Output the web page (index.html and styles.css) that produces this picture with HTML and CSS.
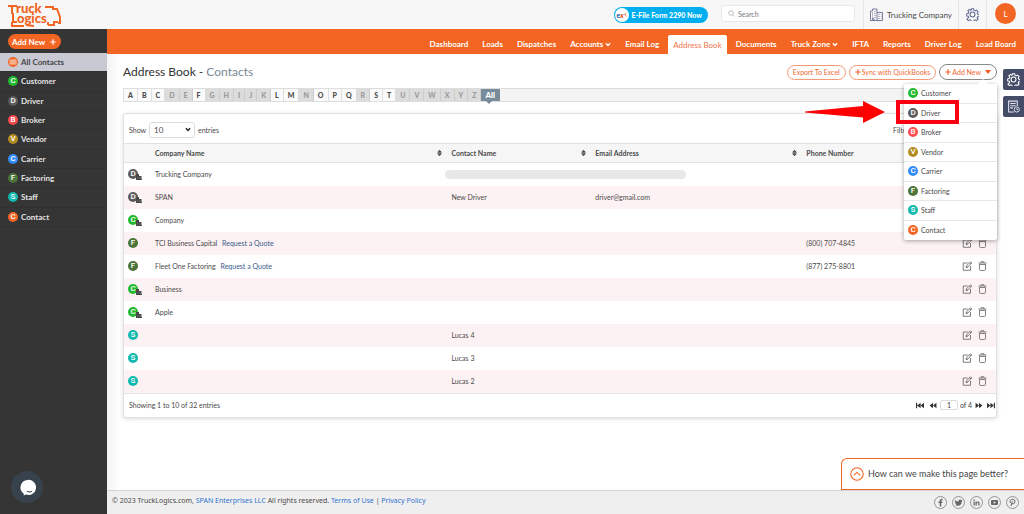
FILE: index.html
```html
<!DOCTYPE html>
<html lang="en">
<head>
<meta charset="utf-8">
<meta name="viewport" content="width=device-width, initial-scale=1">
<title>TruckLogics - Address Book</title>
<link rel="stylesheet" href="styles.css">
</head>
<body>
<svg class="sprite" aria-hidden="true">
  <symbol id="edit" viewBox="0 0 20 20"><path d="M10.500 4H1.500V18.500H16V10" fill="none" stroke="currentColor" stroke-width="1.700"/><path d="M7 13l1-3.500L16 1.500l2.500 2.500-8 8zM14 3.500l2.500 2.500M7 13l3.500-1" fill="none" stroke="currentColor" stroke-width="1.700"/></symbol>
  <symbol id="trash" viewBox="0 0 18 20"><path d="M1 4H17M6 4V1.500H12V4M3 5.500V16.500Q3 19 5.500 19H12.500Q15 19 15 16.500V5.500M4 7H14" fill="none" stroke="currentColor" stroke-width="1.600"/></symbol>
  <symbol id="building" viewBox="0 0 12 12"><path d="M0 0H6V4H11V10H12V12H0z" fill="#484848"/><path d="M3 7V9M6.500 7V9M9 7V9" stroke="#999" stroke-width="1"/></symbol>
  <symbol id="sort" viewBox="0 0 10 14"><path d="M1.500 5.500L5 1.500L8.500 5.500zM1.500 8.500L5 12.500L8.500 8.500z" fill="#777" stroke="#222" stroke-width="1.400"/></symbol>
  <symbol id="chev" viewBox="0 0 10 8"><path d="M1.500 2L5 5.500L8.500 2" fill="none" stroke="currentColor" stroke-width="2.400"/></symbol>
  <symbol id="plus" viewBox="0 0 10 10"><path d="M5 0.500V9.500M0.500 5H9.500" stroke="currentColor" stroke-width="2"/></symbol>
  <symbol id="gear" viewBox="0 0 24 24"><path d="M10 1.500h4l.8 3 2 .9 2.800-1.600 2.700 2.700-1.600 2.800.8 2 3 .8v4l-3 .2-.9 2 1.600 2.300-2.700 2.700-2.700-1.400-2 .8-.8 2.300h-4l-.8-2.300-2-.8-2.700 1.400-2.700-2.700L5 17.300l-.8-2-2.900-.6v-4l2.900-.8.9-1.900L3.500 5.300l2.700-2.700L9 4.500z" fill="none" stroke="currentColor" stroke-width="2"/><circle cx="12" cy="12" r="4.500" fill="none" stroke="currentColor" stroke-width="2"/></symbol>
</svg>

<header class="top">
  <a class="logo" href="#" aria-label="TruckLogics">
    <svg viewBox="0 0 54 26" width="54" height="26">
      <text x="8" y="11" class="logo-word">ruck</text>
      <text x="9" y="21" class="logo-word">ogics</text>
      <g fill="none" stroke="#f26522" stroke-width="2"><path d="M0 4H9M4 4V12M5 11V20H9M4 20V24H16M18 23L26 24"/><path d="M37 5H45V7H49L52 15V21H50M40 23H46V20H50M40 23V20"/></g>
    </svg>
  </a>
  <a class="efile" href="#"><span class="efile-mark"><b>e</b><i>x</i><svg viewBox="0 0 10 10"><path d="M5 4L9 9M6 5L8 2" stroke="#e2502a" stroke-width="1.500"/></svg></span>E-File Form 2290 Now</a>
  <label class="search"><svg viewBox="0 0 14 14"><circle cx="6" cy="6" r="4.500"/><path d="M9.500 9.500L13 13"/></svg><input type="search" placeholder="Search" aria-label="Search"></label>
  <a class="company" href="#"><svg viewBox="0 0 26 26"><path d="M1 25V6H5V2H14V25M14 9H25V25H0M4 10H6M9 7H11M4 14H6M9 11H11M4 18H6M9 15H11M9 19H11M17 13H19M22 13H23M17 17H19M22 17H23M17 21H19M22 21H23M5 25V21H8V25" fill="none" stroke="#646c92" stroke-width="1.700"/></svg>Trucking Company</a>
  <button class="settings" aria-label="Settings"><svg><use href="#gear"/></svg></button>
  <button class="avatar">L</button>
</header>

<div class="shell">
  <aside class="side">
    <div class="side-top"><button class="side-add">Add New <svg><use href="#plus"/></svg></button></div>
    <ul class="side-list">
      <li class="current"><a href="#"><span class="badge orange"><svg viewBox="0 0 12 12"><path d="M1.500 3H10.500V9H1.500zM6 3V9M3 5H5M7 5H9M3 7H5M7 7H9" fill="none" stroke="#fff" stroke-width="1"/></svg></span>All Contacts</a></li>
      <li><a href="#"><span class="badge green">C</span>Customer</a></li>
      <li><a href="#"><span class="badge grey">D</span>Driver</a></li>
      <li><a href="#"><span class="badge red">B</span>Broker</a></li>
      <li><a href="#"><span class="badge gold">V</span>Vendor</a></li>
      <li><a href="#"><span class="badge blue">C</span>Carrier</a></li>
      <li><a href="#"><span class="badge olive">F</span>Factoring</a></li>
      <li><a href="#"><span class="badge teal">S</span>Staff</a></li>
      <li><a href="#"><span class="badge orange">C</span>Contact</a></li>
    </ul>
    <button class="chat" aria-label="Chat"><svg viewBox="0 0 18 18"><path d="M9 1A8 8 0 1 1 7.500 16.500L5 17.500V15.500A8 8 0 0 1 9 1z" fill="#fff"/><path d="M8.500 13Q11 14.500 13.500 13" fill="none" stroke="#37424c" stroke-width="1.200"/></svg></button>
  </aside>

  <div class="content">
    <nav class="nav">
      <a href="#">Dashboard</a><a href="#">Loads</a><a href="#">Dispatches</a><a href="#">Accounts <svg><use href="#chev"/></svg></a><a href="#">Email Log</a><a href="#" class="active">Address Book</a><a href="#">Documents</a><a href="#">Truck Zone <svg><use href="#chev"/></svg></a><a href="#">IFTA</a><a href="#">Reports</a><a href="#">Driver Log</a><a href="#">Load Board</a>
    </nav>

    <main class="main">
      <div class="title-row">
        <h1>Address Book - <span>Contacts</span></h1>
        <div class="actions">
          <button class="pill">Export To Excel</button>
          <button class="pill"><svg><use href="#plus"/></svg>Sync with QuickBooks</button>
          <div class="add-wrap">
            <button class="pill dark"><svg><use href="#plus"/></svg>Add New<span class="caret"></span></button>
            <ul class="menu">
              <li><a href="#"><span class="badge green">C</span>Customer</a></li>
              <li><a href="#"><span class="badge grey">D</span>Driver</a></li>
              <li><a href="#"><span class="badge red">B</span>Broker</a></li>
              <li><a href="#"><span class="badge gold">V</span>Vendor</a></li>
              <li><a href="#"><span class="badge blue">C</span>Carrier</a></li>
              <li><a href="#"><span class="badge olive">F</span>Factoring</a></li>
              <li><a href="#"><span class="badge teal">S</span>Staff</a></li>
              <li><a href="#"><span class="badge orange">C</span>Contact</a></li>
            </ul>
            <span class="mark-frame"></span>
            <svg class="mark-arrow" viewBox="0 0 82 24"><path d="M1 11.500L59 6V1L81 12L59 23V17.500L1 12.500z" fill="#f00"/></svg>
          </div>
        </div>
      </div>

      <div class="letters">
        <a href="#">A</a><a href="#">B</a><a href="#">C</a><a class="off">D</a><a class="off">E</a><a href="#">F</a><a class="off">G</a><a class="off">H</a><a class="off">I</a><a class="off">J</a><a class="off">K</a><a href="#">L</a><a href="#">M</a><a class="off">N</a><a href="#">O</a><a href="#">P</a><a href="#">Q</a><a class="off">R</a><a href="#">S</a><a href="#">T</a><a class="off">U</a><a class="off">V</a><a class="off">W</a><a class="off">X</a><a class="off">Y</a><a class="off">Z</a><a class="all" href="#">All</a>
      </div>

      <section class="panel">
        <div class="panel-top">
          <label>Show <span class="select"><select><option>10</option><option>25</option></select><svg><use href="#chev"/></svg></span> entries</label>
          <span>Filter</span>
        </div>
        <table>
          <colgroup><col class="c-icon"><col class="c-company"><col class="c-contact"><col class="c-email"><col><col class="c-act"></colgroup>
          <thead><tr><th></th><th><span class="th">Company Name<svg><use href="#sort"/></svg></span></th><th><span class="th">Contact Name<svg><use href="#sort"/></svg></span></th><th><span class="th">Email Address<svg><use href="#sort"/></svg></span></th><th>Phone Number</th><th></th></tr></thead>
          <tbody>
            <tr><td><span class="badge grey">D<svg class="firm"><use href="#building"/></svg></span></td><td>Trucking Company</td><td colspan="2" class="masked"><span class="mask"></span></td><td></td><td class="acts"></td></tr>
            <tr><td><span class="badge grey">D<svg class="firm"><use href="#building"/></svg></span></td><td>SPAN</td><td>New Driver</td><td>driver@gmail.com</td><td></td><td class="acts"></td></tr>
            <tr><td><span class="badge green">C<svg class="firm"><use href="#building"/></svg></span></td><td>Company</td><td></td><td></td><td></td><td class="acts"></td></tr>
            <tr><td><span class="badge olive">F</span></td><td>TCI Business Capital <a class="quote" href="#">Request a Quote</a></td><td></td><td></td><td>(800) 707-4845</td><td class="acts"><button aria-label="Edit"><svg><use href="#edit"/></svg></button><button aria-label="Delete"><svg><use href="#trash"/></svg></button></td></tr>
            <tr><td><span class="badge olive">F</span></td><td>Fleet One Factoring <a class="quote" href="#">Request a Quote</a></td><td></td><td></td><td>(877) 275-8801</td><td class="acts"><button aria-label="Edit"><svg><use href="#edit"/></svg></button><button aria-label="Delete"><svg><use href="#trash"/></svg></button></td></tr>
            <tr><td><span class="badge green">C<svg class="firm"><use href="#building"/></svg></span></td><td>Business</td><td></td><td></td><td></td><td class="acts"><button aria-label="Edit"><svg><use href="#edit"/></svg></button><button aria-label="Delete"><svg><use href="#trash"/></svg></button></td></tr>
            <tr><td><span class="badge green">C<svg class="firm"><use href="#building"/></svg></span></td><td>Apple</td><td></td><td></td><td></td><td class="acts"><button aria-label="Edit"><svg><use href="#edit"/></svg></button><button aria-label="Delete"><svg><use href="#trash"/></svg></button></td></tr>
            <tr><td><span class="badge teal">S</span></td><td></td><td>Lucas 4</td><td></td><td></td><td class="acts"><button aria-label="Edit"><svg><use href="#edit"/></svg></button><button aria-label="Delete"><svg><use href="#trash"/></svg></button></td></tr>
            <tr><td><span class="badge teal">S</span></td><td></td><td>Lucas 3</td><td></td><td></td><td class="acts"><button aria-label="Edit"><svg><use href="#edit"/></svg></button><button aria-label="Delete"><svg><use href="#trash"/></svg></button></td></tr>
            <tr><td><span class="badge teal">S</span></td><td></td><td>Lucas 2</td><td></td><td></td><td class="acts"><button aria-label="Edit"><svg><use href="#edit"/></svg></button><button aria-label="Delete"><svg><use href="#trash"/></svg></button></td></tr>
          </tbody>
        </table>
        <div class="panel-foot">
          <span>Showing 1 to 10 of 32 entries</span>
          <div class="pager">
            <button aria-label="First page"><svg viewBox="0 0 14 12"><path d="M0 1H2V11H0zM8 1V11L2 6zM14 1V11L8 6z"/></svg></button>
            <button aria-label="Previous page"><svg viewBox="0 0 14 12"><path d="M7 1V11L1 6zM13 1V11L7 6z"/></svg></button>
            <input type="text" value="1" aria-label="Page">
            <span>of 4</span>
            <button aria-label="Next page"><svg viewBox="0 0 14 12"><path d="M1 1V11L7 6zM7 1V11L13 6z"/></svg></button>
            <button aria-label="Last page"><svg viewBox="0 0 14 12"><path d="M0 1V11L6 6zM6 1V11L12 6zM12 1H14V11H12z"/></svg></button>
          </div>
        </div>
      </section>
    </main>

    <footer class="foot">
      <p>© 2023 TruckLogics.com, <a href="#">SPAN Enterprises LLC</a> All rights reserved. <a href="#">Terms of Use</a> | <a href="#">Privacy Policy</a></p>
      <div class="social">
        <a href="#" aria-label="Facebook"><svg viewBox="0 0 26 26"><circle cx="13" cy="13" r="12"/><path d="M11.500 21V14H9V11H11.500V9Q11.500 5.500 15 5.500H17V8.500H15.500Q14.500 8.500 14.500 9.500V11H17L16.500 14H14.500V21z"/></svg></a>
        <a href="#" aria-label="Twitter"><svg viewBox="0 0 26 26"><circle cx="13" cy="13" r="12"/><path d="M6 8Q9 11 13 11Q12.500 7 16 7Q17.500 7 18.500 8L20.500 7.500L19.500 9.500L21 9.500L19.500 11Q19.500 19 11.500 19.500Q8 19.500 5.500 18Q8 18 9.500 17Q7 16.500 6.500 15H8Q6 14 6 12L7 12Q5 10 6 8z"/></svg></a>
        <a href="#" aria-label="LinkedIn"><svg viewBox="0 0 26 26"><circle cx="13" cy="13" r="12"/><path d="M7 11H9.500V19H7zM7 7H9.500V9.500H7zM11 11H13.500V12Q16 10 18 11.500Q19 12.500 19 14V19H16.500V14.500Q16 12.500 14.500 13Q13.500 13.500 13.500 15V19H11z"/></svg></a>
        <a href="#" aria-label="YouTube"><svg viewBox="0 0 26 26"><circle cx="13" cy="13" r="12"/><path fill-rule="evenodd" d="M8 8H18Q20 8 20 10V16Q20 18 18 18H8Q6 18 6 16V10Q6 8 8 8zM11.500 10.500V15.500L16 13z"/></svg></a>
        <a href="#" aria-label="Pinterest"><svg viewBox="0 0 26 26"><circle cx="13" cy="13" r="12"/><path class="pin" d="M10 20L12.500 10.500M8.500 14Q6.500 7 13 6.500Q19 7 18 12Q16.500 17 12 15.500"/></svg></a>
      </div>
    </footer>
  </div>
</div>

<div class="rail">
  <button aria-label="Preferences"><svg><use href="#gear"/></svg></button>
  <button aria-label="Activity log"><svg viewBox="0 0 24 24"><path d="M19 11V2H3V22H13M6 6.500H16M6 10.500H16M6 14.500H11" fill="none" stroke="#dfe2ee" stroke-width="2"/><circle cx="18" cy="17.500" r="4.800" fill="none" stroke="#dfe2ee" stroke-width="1.800"/><path d="M18 15V17.500H20.500" fill="none" stroke="#dfe2ee" stroke-width="1.500"/></svg></button>
</div>
<button class="feedback"><svg viewBox="0 0 26 26"><circle cx="13" cy="13" r="11.500"/><path d="M7 15.500L13 10L19 15.500"/></svg>How can we make this page better?</button>
</body>
</html>
```

FILE: styles.css
```css
* { box-sizing: border-box; }
body {
  margin: 0;
  min-height: 100vh;
  display: flex;
  flex-direction: column;
  position: relative;
  background: #fff;
  color: #4a4a4a;
  font: 7px/10px Lato, "Liberation Sans", sans-serif;
}
a { color: inherit; text-decoration: none; }
button, input, select { font: inherit; color: inherit; margin: 0; padding: 0; border: 0; background: none; }
ul { list-style: none; margin: 0; padding: 0; }
.sprite { display: none; }

.top {
  display: flex;
  align-items: center;
  height: 29px;
  padding: 0 8px;
  background: #f7f7f7;
}
.logo { margin-right: auto; height: 26px; }
.logo svg { overflow: visible; }
.logo-word { font: 900 13px Lato, sans-serif; fill: #f26522; }
.efile {
  display: flex;
  align-items: center;
  gap: 3px;
  height: 16px;
  padding-right: 6px;
  border-radius: 8px;
  background: #00aeef;
  color: #fff;
  font-size: 7px;
  font-weight: 900;
}
.efile-mark {
  display: flex;
  align-items: center;
  justify-content: center;
  width: 14px;
  height: 14px;
  margin-left: 1px;
  border-radius: 50%;
  background: #fff;
  color: #274d9b;
}
.efile-mark i { color: #e2502a; }
.efile-mark svg { width: 5px; height: 7px; margin-left: -2px; }
.search {
  display: flex;
  align-items: center;
  gap: 3px;
  width: 134px;
  height: 17px;
  margin: 0 8px 2px 13px;
  padding: 0 6px;
  border: 1px solid #e6e6e6;
  border-radius: 3px;
  background: #fff;
}
.search svg { width: 7px; height: 7px; fill: none; stroke: #aaa; stroke-width: 1.500; }
.search input { flex: 1; min-width: 0; outline: 0; }
.search input::placeholder { color: #777; }
.company {
  display: flex;
  align-items: center;
  gap: 4px;
  align-self: stretch;
  padding: 0 6px;
  border-left: 1px solid #e5e5e5;
  border-right: 1px solid #e5e5e5;
  font-size: 8px;
}
.company svg { width: 13px; height: 13px; }
.settings { align-self: stretch; width: 28px; padding: 0 7px; border-right: 1px solid #e5e5e5; color: #646c92; }
.settings svg { display: block; width: 13px; height: 13px; }
.avatar { width: 21px; height: 21px; margin: 0 0 2px 8px; border-radius: 50%; background: #f26522; color: #fff; font-size: 8px; }

.shell { flex: 1; display: flex; }
.side { display: flex; flex-direction: column; width: 107px; background: #353535; color: #e2e2e2; font-size: 8px; }
.side-top { height: 24px; padding: 5px 8px; }
.side-add {
  display: flex;
  align-items: center;
  gap: 5px;
  height: 15px;
  padding: 0 5px 0 4px;
  border-radius: 8px;
  background: #f26522;
  color: #fff;
  font-weight: 700;
}
.side-add svg { width: 6px; height: 6px; }
.side-list { display: grid; grid-auto-rows: 1fr; height: 174px; font-weight: 700; }
.side-list li { display: grid; border-bottom: 1px solid #303030; }
.side-list a { display: flex; align-items: center; gap: 3px; padding-left: 8px; }
.side-list .current { background: #c9c9d4; color: #444; }
.chat {
  width: 32px;
  height: 32px;
  margin: auto 0 11px 11px;
  border-radius: 50%;
  background: #37424c;
}
.chat svg { display: block; width: 17px; height: 17px; margin: auto; }

.badge {
  position: relative;
  display: flex;
  align-items: center;
  justify-content: center;
  width: 10px;
  height: 10px;
  border-radius: 50%;
  color: #fff;
  font: 500 8px/10px Roboto, sans-serif;
}
.badge > svg { width: 8px; height: 8px; }
.badge .firm { position: absolute; left: 8px; top: 5px; width: 6px; height: 6px; }
.green { background: #22b92f; }
.grey { background: #5c5c5c; }
.red { background: #fb4b4f; }
.gold { background: #b28d24; }
.blue { background: #338cf5; }
.olive { background: #4c7439; }
.teal { background: #0fb9ad; }
.orange { background: #f26522; }

.content { flex: 1; min-width: 0; display: flex; flex-direction: column; background: linear-gradient(90deg, #f3f3f3, #fff 14px); }
.nav {
  display: flex;
  align-items: flex-end;
  justify-content: flex-end;
  height: 25px;
  padding-right: 1px;
  background: #f26522;
  color: #fff;
  font-size: 8px;
  font-weight: 700;
}
.nav a { display: flex; align-items: center; height: 19px; gap: 2px; padding: 0 7px 2px; white-space: nowrap; }
.nav svg { width: 6px; height: 5px; margin-top: 2px; }
.nav .active { padding: 0 5px; margin: 0 2px; border-radius: 2px 2px 0 0; background: #fff; color: #f0764a; font-weight: 400; }

.main { flex: 1; padding: 10px 27px 20px 16px; }
.title-row { display: flex; align-items: center; justify-content: space-between; height: 16px; }
h1 { margin: 0; font-size: 12px; line-height: 16px; font-weight: 400; color: #333; }
h1 span { color: #7b8896; }
.actions { display: flex; align-items: center; gap: 3px; }
.pill {
  display: flex;
  align-items: center;
  gap: 1px;
  height: 15px;
  padding: 0 5px;
  border: 1px solid #f49a73;
  border-radius: 8px;
  background: #fff;
  color: #ee6a35;
  white-space: nowrap;
}
.pill svg { width: 6px; height: 6px; }
.pill.dark { height: 16px; border-color: #888; }
.caret { margin-left: 3px; border: 3px solid transparent; border-top: 4px solid #ee5a20; border-bottom: 0; }
.add-wrap { position: relative; }
.menu {
  position: absolute;
  z-index: 2;
  right: 0;
  top: 20px;
  display: grid;
  grid-auto-rows: 1fr;
  width: 93px;
  height: 156px;
  border-radius: 2px;
  background: #fff;
  box-shadow: 0 1px 4px rgba(0, 0, 0, .35);
}
.menu::before { content: ""; position: absolute; right: 9px; top: -5px; border: 5px solid transparent; border-top: 0; border-bottom-color: #fff; }
.menu li { display: grid; border-bottom: 1px solid #e8e8e8; }
.menu li:last-child { border-bottom: 0; }
.menu a { display: flex; align-items: center; gap: 3px; padding-left: 4px; }
.mark-frame { position: absolute; z-index: 3; right: 38px; top: 36px; width: 63px; height: 24px; border: 4px solid #fa0010; }
.mark-arrow { position: absolute; z-index: 3; right: 111px; top: 36px; width: 82px; height: 24px; }

.letters {
  display: flex;
  height: 14px;
  margin-top: 8px;
  border: 1px solid #ddd;
  background: #f4f4f4;
  line-height: 12px;
}
.letters a { padding: 0 4px; border-right: 1px solid #ddd; background: #fafafa; font-weight: 900; text-align: center; }
.letters .off { background: #dcdcdc; border-color: #ccc; color: #999; font-weight: 900; }
.letters .all { position: relative; background: #778b9b; border-color: #778b9b; color: #fff; font-size: 8px; }
.all::after { content: ""; position: absolute; left: 5px; top: 12px; border: 3px solid transparent; border-top-color: #778b9b; border-bottom: 0; }

.panel { margin-top: 11px; border: 1px solid #e2e2e2; border-radius: 3px; background: #fff; box-shadow: 0 1px 4px rgba(0, 0, 0, .15); }
.panel-top { display: flex; align-items: center; justify-content: space-between; height: 29px; padding: 2px 87px 0 5px; }
.panel-top label { display: flex; align-items: center; gap: 3px; }
.select { display: flex; align-items: center; width: 46px; height: 16px; border: 1px solid #ddd; border-radius: 3px; padding-right: 3px; }
.select select { flex: 1; min-width: 0; padding-left: 4px; appearance: none; outline: 0; font-size: 8px; }
.select svg { width: 6px; height: 5px; color: #222; }
table { width: 100%; table-layout: fixed; border-collapse: collapse; }
.c-icon { width: 25px; }
.c-company { width: 34%; }
.c-contact { width: 16.5%; }
.c-email { width: 24.2%; }
.c-act { width: 40px; }
th, td { padding: 0 6px; text-align: left; white-space: nowrap; }
th { height: 19px; border-top: 1px solid #e0e0e0; border-bottom: 1px solid #e0e0e0; background: #f6f6f6; }
.th { display: flex; align-items: center; justify-content: space-between; }
.th svg { width: 5px; height: 8px; margin-right: -3px; }
td { height: 23px; }
td:first-child { padding-left: 4px; }
tbody tr:nth-child(even) { background: #fdf2f3; }
.quote { margin-left: 3px; color: #3a5a8c; }
td.masked { padding-left: 0; }
.mask { display: block; width: 241px; height: 9px; border-radius: 5px; background: #e8e8e8; }
td.acts { padding-right: 4px; font-size: 0; }
.acts button { width: 11px; height: 11px; margin-right: 4px; color: #666; vertical-align: middle; }
.acts svg { display: block; width: 11px; height: 10px; }
.panel-foot { display: flex; align-items: center; justify-content: space-between; height: 24px; padding: 0 1px 0 5px; border-top: 1px solid #e4e4e4; }
.pager { display: flex; align-items: center; gap: 2px; color: #444; }
.pager button { width: 9px; height: 9px; }
.pager button:first-child { margin-right: 2px; }
.pager button:last-child { margin-left: 1px; }
.pager svg { display: block; width: 8px; height: 7px; margin: auto; fill: #333; }
.pager input { width: 18px; height: 10px; border: 1px solid #ddd; border-radius: 2px; text-align: center; }

.foot { display: flex; align-items: center; justify-content: space-between; height: 24px; padding: 0 5px; border-top: 1px solid #d4d4d4; background: #efefef; }
.foot p { margin: 0 0 4px; font: 7px/10px "Noto Sans", sans-serif; }
.foot p a { color: #2f74d0; }
.social { display: flex; gap: 5px; }
.social svg { display: block; width: 13px; height: 13px; fill: #666; }
.social circle { fill: none; stroke: #777; stroke-width: 1.500; }
.social .pin { fill: none; stroke: #666; stroke-width: 2; }

.rail { position: absolute; right: 0; top: 69px; display: grid; gap: 6px; }
.rail button { width: 21px; height: 21px; border-radius: 2px 0 0 2px; background: #444c67; color: #fff; }
.rail svg { display: block; width: 13px; height: 13px; margin: auto; }
.feedback {
  position: absolute;
  right: 0;
  bottom: 24px;
  display: flex;
  align-items: center;
  gap: 4px;
  height: 32px;
  padding: 0 16px 0 8px;
  border: 1px solid #f26522;
  border-right: 0;
  border-radius: 6px 0 0 0;
  background: #fff;
  font-size: 9px;
  color: #444;
}
.feedback svg { width: 14px; height: 14px; fill: none; stroke: #f26522; stroke-width: 2; }
```
